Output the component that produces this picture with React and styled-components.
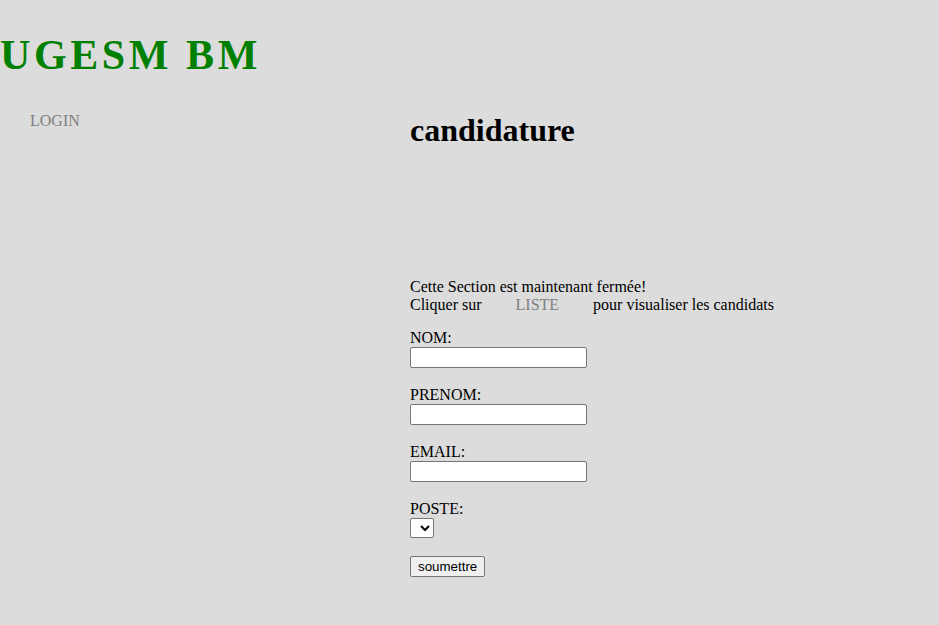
import React from 'react';
import styled, { createGlobalStyle } from 'styled-components';

const GlobalStyle = createGlobalStyle`
    html, body {
        margin: 0;
        padding: 0;
        background-color: #dcdcdc;
    }
    body{
        font-family: "Liberation Serif", "Times New Roman", serif;
        font-size: 16px;
        color: #000;
    }
`;

const Page = styled.div`
    box-sizing: border-box;
    min-height: 625px;
    padding-top: 32px;
`;

const Brand = styled.h1`
    margin: 0;
    font-size: 42px;
    line-height: 46px;
    font-weight: bold;
    letter-spacing: 3.6px;
    color: #008000;
    white-space: nowrap;
`;

const Layout = styled.div`
    display: grid;
    grid-template-columns: 410px 1fr;
    margin-top: 34px;
`;

const Nav = styled.nav`
    .nav-link{
        display: inline-block;
        padding: 0 30px;
        color: #808080;
        text-decoration: none;
    }
`;

const Main = styled.main`
    .title{
        margin: 0;
        font-size: 32px;
        line-height: 37px;
        font-weight: bold;
    }
`;

const Notice = styled.div`
    margin-top: 129px;

    a{
        padding: 0 30px;
        color: #808080;
        text-decoration: none;
    }
`;

const Form = styled.form`
    margin-top: 15px;
`;

const Field = styled.div`
    margin-bottom: ${props => props.gap || 18}px;

    label{
        display: block;
    }
`;

const TextInput = styled.input`
    display: block;
    box-sizing: border-box;
    width: 177px;
    height: 21px;
    margin: 0;
    padding: 1px 2px;
    background: #fff;
    border: 1px solid #767676;
    border-radius: 2px;
    font-family: "Liberation Sans", Arial, sans-serif;
    font-size: 13.33px;
`;

const Select = styled.select`
    display: block;
    box-sizing: border-box;
    width: 24px;
    height: 20px;
    margin: 0;
    background: #fff;
    border: 1px solid #767676;
    border-radius: 2px;
    font-family: "Liberation Sans", Arial, sans-serif;
    font-size: 13.33px;
`;

const Submit = styled.button`
    box-sizing: border-box;
    height: 21px;
    margin: 0;
    padding: 1px 7px;
    background: #efefef;
    border: 1px solid #767676;
    border-radius: 2px;
    font-family: "Liberation Sans", Arial, sans-serif;
    font-size: 13.33px;
    color: #000;
`;

const fields = [
    { id: 'nom', label: 'NOM:' },
    { id: 'prenom', label: 'PRENOM:' },
    { id: 'email', label: 'EMAIL:' },
];

const App = () => {
    return (
        <Page>
            <GlobalStyle />
            <Brand>UGESM BM</Brand>
            <Layout>
                <Nav>
                    <a className="nav-link" href="#login">LOGIN</a>
                </Nav>
                <Main>
                    <h1 className="title">candidature</h1>
                    <Notice>
                        Cette Section est maintenant fermée!<br />
                        Cliquer sur <a href="#liste">LISTE</a> pour visualiser les candidats
                    </Notice>
                    <Form onSubmit={e => e.preventDefault()}>
                        {fields.map(f => (
                            <Field key={f.id}>
                                <label htmlFor={f.id}>{f.label}</label>
                                <TextInput id={f.id} type="text" />
                            </Field>
                        ))}
                        <Field gap={18}>
                            <label htmlFor="poste">POSTE:</label>
                            <Select id="poste"></Select>
                        </Field>
                        <Submit type="submit">soumettre</Submit>
                    </Form>
                </Main>
            </Layout>
        </Page>
    );
};

export default App;
